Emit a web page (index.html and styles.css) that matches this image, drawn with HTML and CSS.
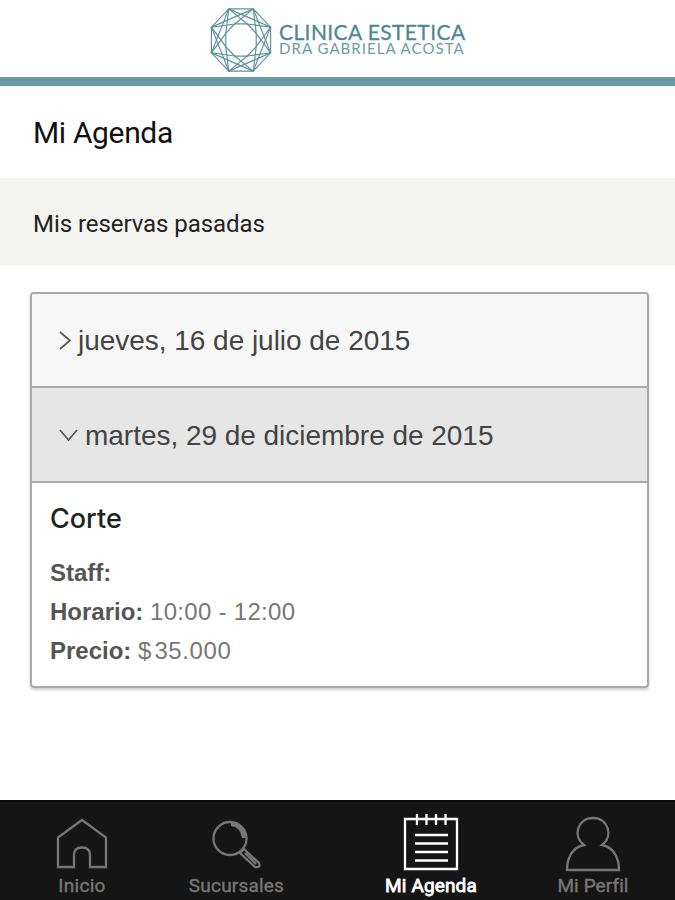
FILE: index.html
```html
<!DOCTYPE html>
<html lang="es">
<head>
<meta charset="utf-8">
<title>Mi Agenda</title>
<link rel="stylesheet" href="styles.css">
</head>
<body>
<div class="app">
  <header class="brand">
    <svg class="brand-mark" viewBox="-31 -33 62 66" aria-hidden="true">
      <g transform="scale(.97 1.02)">
        <path d="M-12.6-30.5H12.6L30.5-12.6V12.6L12.6 30.5H-12.6L-30.5 12.6V-12.6Z"/>
        <path d="M-12.6-30.5L30.5-12.6L12.6 30.5L-30.5 12.6Z M12.6-30.5L30.5 12.6L-12.6 30.5L-30.5-12.6Z"/>
        <path d="M-6.5-15.7H6.5L15.7-6.5V6.5L6.5 15.7H-6.5L-15.7 6.5V-6.5Z"/>
        <path d="M6.5-15.7L-12.6-30.5L-15.7-6.5 M15.7-6.5L12.6-30.5L-6.5-15.7 M15.7 6.5L30.5-12.6L6.5-15.7 M6.5 15.7L30.5 12.6L15.7-6.5 M-6.5 15.7L12.6 30.5L15.7 6.5 M-15.7 6.5L-12.6 30.5L6.5 15.7 M-15.7-6.5L-30.5 12.6L-6.5 15.7 M-6.5-15.7L-30.5-12.6L-15.7 6.5"/>
      </g>
    </svg>
    <div class="brand-text">
      <span class="brand-name">CLINICA ESTETICA</span>
      <span class="brand-sub">DRA GABRIELA ACOSTA</span>
    </div>
  </header>
  <main>
    <h1 class="title"><span>Mi Agenda</span></h1>
    <h2 class="section"><span>Mis reservas pasadas</span></h2>
    <div class="card">
      <div class="row">
        <svg class="chevron right" viewBox="0 0 12 19"><path d="M1 1L11 9.500L1 18"/></svg>
        <span class="date">jueves, 16 de julio de 2015</span>
      </div>
      <div class="row open">
        <svg class="chevron down" viewBox="0 0 19 12"><path d="M1 1L9.500 11L18 1"/></svg>
        <span class="date">martes, 29 de diciembre de 2015</span>
      </div>
      <div class="detail">
        <h3 class="service"><span>Corte</span></h3>
        <p><b>Staff:</b></p>
        <p><b>Horario:</b> <span class="time">10:00 - 12:00</span></p>
        <p><b>Precio:</b> <span class="amount"><span class="currency">$</span>35.000</span></p>
      </div>
    </div>
  </main>
  <nav class="tabs">
    <a class="tab home">
      <svg viewBox="0 0 60 60"><path d="M6 21.500L30 4L54 21.500V51H38V39Q38 31.500 30 31.500T22 39V51H6Z"/></svg>
      <span>Inicio</span>
    </a>
    <a class="tab places">
      <svg viewBox="0 0 60 60"><circle cx="23" cy="22.500" r="16.500"/><path d="M33 37L37 33L52 47Q54 52 48 51Z M38 37L49 48"/><path class="glare" d="M24 8Q35 9 37 22"/></svg>
      <span>Sucursales</span>
    </a>
    <a class="tab agenda active">
      <svg viewBox="0 0 60 60"><path d="M4 3H56V53H4Z M14 19H47 M14 27.500H47 M14 36H47 M14 44.500H47 M16 -2V9 M25.500-2V9 M35-2V9 M44.500-2V9"/></svg>
      <span>Mi Agenda</span>
    </a>
    <a class="tab profile">
      <svg viewBox="0 0 60 60"><path d="M21 29C9 20 15 2 30 2S51 20 39 29C50 31 56 41 56 54H4C4 41 10 31 21 29Z"/></svg>
      <span>Mi Perfil</span>
    </a>
  </nav>
</div>
</body>
</html>
```

FILE: styles.css
```css
* { box-sizing: border-box; }
body { margin: 0; background: #fff; font-family: Roboto, sans-serif; }
h1, h2, h3, p { margin: 0; font-weight: 400; }
.app { display: flex; flex-direction: column; height: 900px; overflow: hidden; }
main { flex: 1; }
.brand { display: flex; align-items: flex-start; height: 86px; padding: 7px 0 0 210px; border-bottom: 9px solid #6799a6; }
.brand-mark { width: 62px; height: 66px; fill: none; stroke: #5d929d; stroke-width: 1.2; }
.brand-text { display: flex; flex-direction: column; margin: 15px 0 0 7px; font-family: Lato, sans-serif; white-space: nowrap; color: #4f8794; }
.brand-name { font-size: 21px; line-height: 19px; letter-spacing: .4px; -webkit-text-stroke: .3px #4f8794; }
.brand-sub { font-size: 15px; line-height: 15px; letter-spacing: 1.05px; color: #6d9ca6; }
.title { height: 92px; padding-left: 33px; font-size: 30px; line-height: 93px; letter-spacing: -.35px; color: #111; }
.section { height: 87px; padding-left: 33px; background: #f4f4f0; font-size: 24px; line-height: 92px; letter-spacing: -.06px; color: #222; }
.card { margin: 27px 26px 0 30px; height: 396px; border: 2px solid #a9a9a9; border-radius: 4px; box-shadow: 0 2px 3px #0003; overflow: hidden; font-family: "Liberation Sans", sans-serif; }
.row { display: flex; align-items: center; height: 94px; padding-left: 27px; border-bottom: 2px solid #a9a9a9; background: #f7f7f7; }
.row.open { height: 95px; background: #e6e6e6; }
.date { font-size: 28px; line-height: 30px; letter-spacing: -.03px; color: #444; padding-top: 2px; white-space: nowrap; }
.chevron { fill: none; stroke: #555; stroke-width: 1.7; }
.right { width: 12px; height: 19px; margin-right: 7px; }
.down { width: 19px; height: 12px; margin-right: 7px; }
.detail { padding: 17px 0 0 18px; }
.service { margin-bottom: 15px; font: 500 27px/38px Inter, sans-serif; color: #222; }
.detail p { height: 39px; font-size: 24px; line-height: 39px; color: #777; white-space: nowrap; }
.detail b { color: #555; }
.time { letter-spacing: .3px; }
.amount { letter-spacing: .6px; }
.currency { letter-spacing: 3px; }
.tabs { display: flex; height: 100px; padding: 0 5px; background: #151515; border-top: 2px solid #090909; }
.tab { display: flex; flex-direction: column; align-items: center; padding-top: 14px; width: 154px; color: #777; font-size: 19px; line-height: 20px; letter-spacing: .1px; white-space: nowrap; }
.places { width: 155px; }
.agenda { width: 234px; }
.profile { width: 90px; }
.tab svg { width: 60px; height: 60px; fill: none; stroke: currentColor; stroke-width: 2.3; overflow: visible; }
.tab span { -webkit-text-stroke: .4px currentColor; }
.home span { letter-spacing: .3px; }
.places span { letter-spacing: .2px; }
.tab .glare { stroke-width: 4; }
.tab.active { color: #fff; }
.tab.active span { -webkit-text-stroke-width: .8px; letter-spacing: .15px; }
```
